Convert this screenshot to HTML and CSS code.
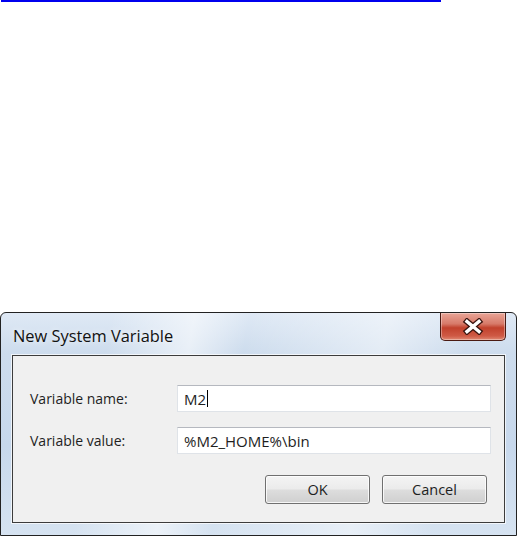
FILE: index.html
```html
<!DOCTYPE html>
<html lang="en">
<head>
  <meta charset="UTF-8" />
  <title>New System Variable</title>
  <link rel="stylesheet" href="styles.css">
</head>
<body>

  <div class="link-line"></div>

  <div class="window">
    <div class="titlebar">
      <span class="title">New System Variable</span>
      <div class="close-btn">
        <svg width="24" height="17" viewBox="0 0 24 17">
          <path d="M6 3.5 L18 13.5 M18 3.5 L6 13.5" stroke="#3a1510" stroke-width="6" stroke-linecap="square" fill="none"/>
          <path d="M6 3.5 L18 13.5 M18 3.5 L6 13.5" stroke="#ffffff" stroke-width="3.4" stroke-linecap="square" fill="none"/>
        </svg>
      </div>
    </div>

    <div class="client">
      <div class="field-row">
        <label class="field-label">Variable name:</label>
        <div class="textbox">M2<span class="caret"></span></div>
      </div>
      <div class="field-row">
        <label class="field-label">Variable value:</label>
        <div class="textbox">%M2_HOME%\bin</div>
      </div>
      <div class="buttons">
        <div class="btn">OK</div>
        <div class="btn">Cancel</div>
      </div>
    </div>
  </div>

</body>
</html>
```

FILE: styles.css
```css
/* Page */
body {
  margin: 0;
  background: #ffffff;
  font-family: "Open Sans", "Noto Sans", sans-serif;
}

/* Leftover link underline at the top */
.link-line {
  width: 440px;
  height: 2px;
  margin-left: 1px;
  background: #0000ee;
}

/* Window frame */
.window {
  position: relative;
  margin-top: 310px;
  width: 517px;
  height: 224px;
  box-sizing: border-box;
  border: 1px solid #222;
  border-radius: 6px 6px 0 0;
  padding: 0 11px 12px 11px;
  display: flex;
  flex-direction: column;
  background:
    linear-gradient(100deg, rgba(255,255,255,0) 20%, rgba(255,255,255,0.55) 35%, rgba(255,255,255,0) 45%, rgba(255,255,255,0.45) 70%, rgba(255,255,255,0) 85%),
    linear-gradient(#dfe9f5, #cddced 40px, #c7d8ec 60%, #d6e3f1);
}

.titlebar {
  height: 42px;
  display: flex;
  align-items: center;
  padding-top: 2px;
  box-sizing: border-box;
}

.title {
  margin-left: 1px;
  font-size: 16.4px;
  color: #111;
  text-shadow: 0 0 6px rgba(255,255,255,0.9);
}

/* Red close button */
.close-btn {
  position: absolute;
  top: 0;
  right: 10px;
  width: 66px;
  height: 28px;
  box-sizing: border-box;
  border: 1px solid #4a1a12;
  border-top: none;
  border-radius: 0 0 5px 5px;
  background: linear-gradient(#e9a597, #d77a69 40%, #c1412c 55%, #cf5a45 85%, #e08a74);
  display: flex;
  align-items: center;
  justify-content: center;
  box-shadow: inset 0 0 0 1px rgba(255,255,255,0.35);
}

/* Client area */
.client {
  flex: 1;
  border: 1px solid #3c3c3c;
  background: #f0f0f0;
  padding: 29px 14px 16px 17px;
  display: flex;
  flex-direction: column;
  gap: 15px;
  box-shadow: 0 0 0 1px rgba(255,255,255,0.7);
}

.field-row {
  display: flex;
  align-items: center;
}

.field-label {
  width: 147px;
  flex-shrink: 0;
  font-size: 14px;
  color: #1e1e1e;
}

.textbox {
  width: 314px;
  height: 27px;
  flex-shrink: 0;
  box-sizing: border-box;
  background: #fff;
  border: 1px solid #dfe3e8;
  border-top-color: #b5b8bf;
  padding: 0 6px;
  display: flex;
  align-items: center;
  font-size: 15px;
  color: #1e1e1e;
}

.caret {
  width: 1px;
  height: 17px;
  margin-left: 1px;
  background: #000;
}

/* Buttons */
.buttons {
  margin-top: 6px;
  padding-right: 3px;
  display: flex;
  justify-content: flex-end;
  gap: 12px;
}

.btn {
  width: 105px;
  height: 29px;
  box-sizing: border-box;
  border: 1px solid #707070;
  border-radius: 3px;
  background: linear-gradient(#f4f4f4, #ebebeb 48%, #dddddd 52%, #cfcfcf);
  box-shadow: inset 0 0 0 1px rgba(255,255,255,0.8);
  display: flex;
  align-items: center;
  justify-content: center;
  font-size: 14.5px;
  color: #1e1e1e;
}
```
